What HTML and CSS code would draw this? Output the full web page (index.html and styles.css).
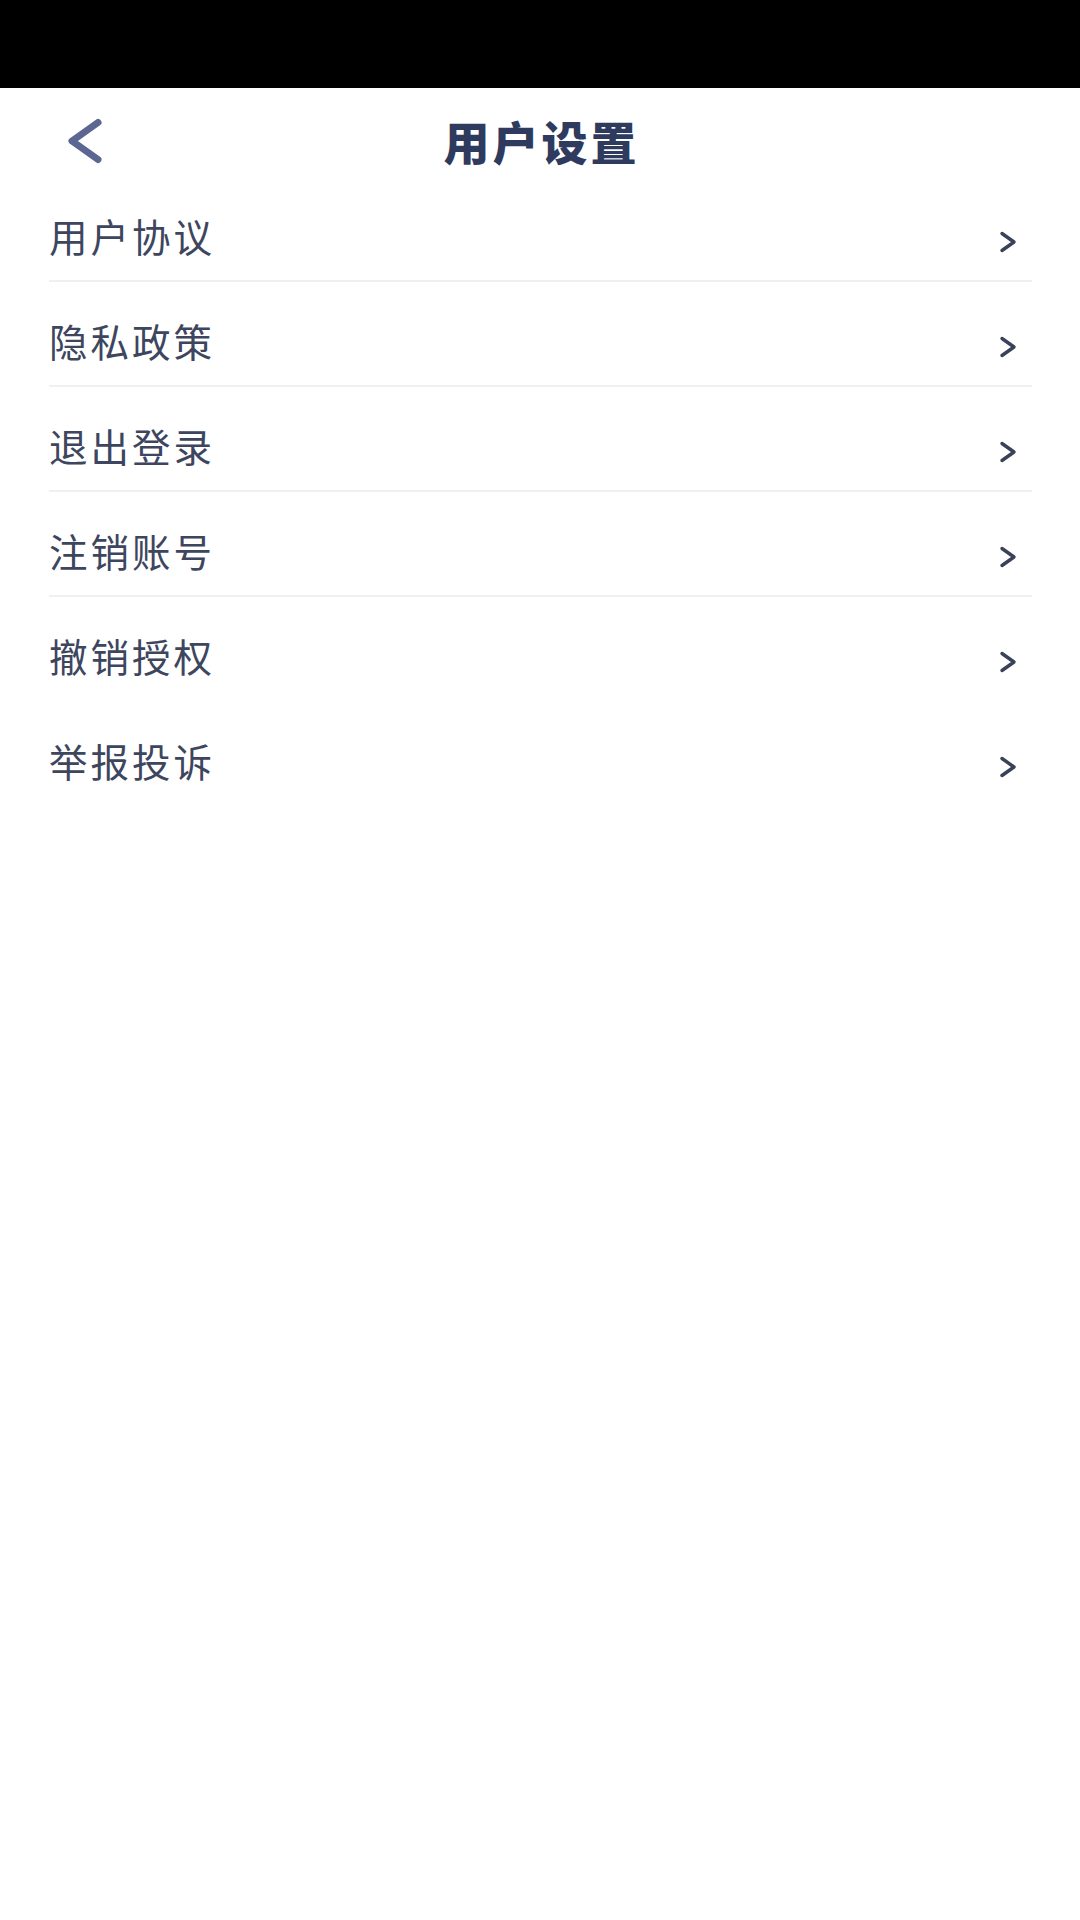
FILE: index.html
```html
<!DOCTYPE html>
<html lang="zh-CN">
<head>
    <meta charset="UTF-8">
    <meta name="viewport" content="width=device-width, initial-scale=1.0">
    <title>用户设置</title>
    <link rel="stylesheet" href="styles.css">
</head>
<body>
    <div class="status-bar"></div>

    <div class="header">
        <a class="back" href="#">
            <svg width="42" height="50" viewBox="0 0 42 50">
                <polyline points="34,6.5 8,25 34,43.5" fill="none" stroke="#5b6791" stroke-width="7" stroke-linecap="round" stroke-linejoin="round"/>
            </svg>
        </a>
        <h1 class="title">用户设置</h1>
        <div></div>
    </div>

    <ul class="menu">
        <li class="menu-item"><span>用户协议</span><i class="arrow"><svg width="20" height="26" viewBox="0 0 20 26"><polyline points="4,4.5 16,13 4,21.5" fill="none" stroke="#3a4259" stroke-width="3.4" stroke-linecap="round" stroke-linejoin="round"/></svg></i></li>
        <li class="menu-item"><span>隐私政策</span><i class="arrow"><svg width="20" height="26" viewBox="0 0 20 26"><polyline points="4,4.5 16,13 4,21.5" fill="none" stroke="#3a4259" stroke-width="3.4" stroke-linecap="round" stroke-linejoin="round"/></svg></i></li>
        <li class="menu-item"><span>退出登录</span><i class="arrow"><svg width="20" height="26" viewBox="0 0 20 26"><polyline points="4,4.5 16,13 4,21.5" fill="none" stroke="#3a4259" stroke-width="3.4" stroke-linecap="round" stroke-linejoin="round"/></svg></i></li>
        <li class="menu-item"><span>注销账号</span><i class="arrow"><svg width="20" height="26" viewBox="0 0 20 26"><polyline points="4,4.5 16,13 4,21.5" fill="none" stroke="#3a4259" stroke-width="3.4" stroke-linecap="round" stroke-linejoin="round"/></svg></i></li>
        <li class="menu-item no-line"><span>撤销授权</span><i class="arrow"><svg width="20" height="26" viewBox="0 0 20 26"><polyline points="4,4.5 16,13 4,21.5" fill="none" stroke="#3a4259" stroke-width="3.4" stroke-linecap="round" stroke-linejoin="round"/></svg></i></li>
        <li class="menu-item no-line"><span>举报投诉</span><i class="arrow"><svg width="20" height="26" viewBox="0 0 20 26"><polyline points="4,4.5 16,13 4,21.5" fill="none" stroke="#3a4259" stroke-width="3.4" stroke-linecap="round" stroke-linejoin="round"/></svg></i></li>
    </ul>
</body>
</html>
```

FILE: styles.css
```css
/* General */
body {
    margin: 0;
    background-color: #ffffff;
    font-family: "Noto Sans CJK SC", "Noto Sans", sans-serif;
}

.status-bar {
    height: 88px;
    background-color: #000;
}

/* Header */
.header {
    display: grid;
    grid-template-columns: 1fr auto 1fr;
    align-items: center;
    height: 89px;
    padding: 16px 0 0 64px;
    box-sizing: border-box;
}
.back {
    display: flex;
    width: 42px;
    height: 50px;
}
.title {
    margin: -2px -3px 0 -64px;
    font-size: 46px;
    font-weight: 900;
    letter-spacing: 3px;
    color: #2f3b5e;
    line-height: 1;
}

/* Menu */
.menu {
    list-style: none;
    margin: 0 48px 0 49px;
    padding: 0;
}
.menu-item {
    display: flex;
    align-items: center;
    justify-content: space-between;
    height: 105px;
    padding: 12px 14px 0 0;
    box-sizing: border-box;
    border-bottom: 2px solid #eff0f2;
    font-size: 38.5px;
    letter-spacing: 3px;
    color: #3d465e;
}
.menu-item.no-line {
    border-bottom-color: transparent;
}
.arrow {
    display: flex;
    margin-top: 14px;
}
```
